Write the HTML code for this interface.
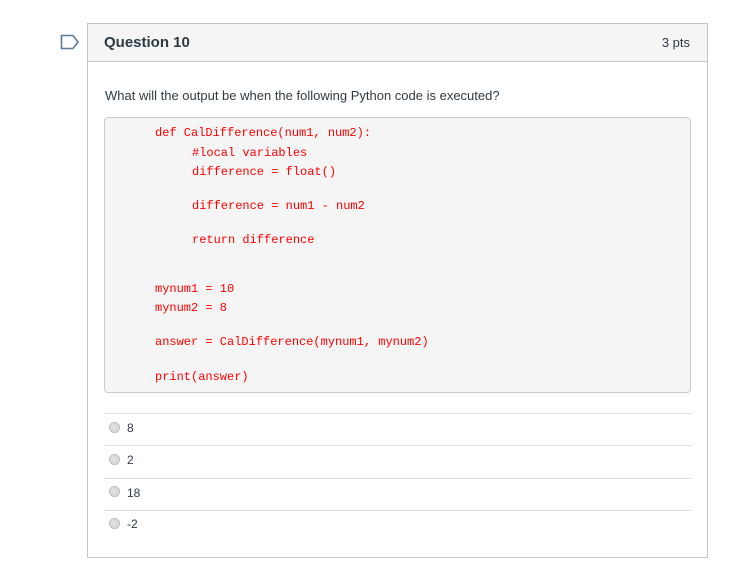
<!DOCTYPE html>
<html><head><meta charset="utf-8"><style>
*{margin:0;padding:0;box-sizing:border-box}
body{width:730px;height:571px;background:#fff;position:relative;font-family:"Liberation Sans",sans-serif;color:#2d3b45;overflow:hidden}
.abs{position:absolute}
.box{left:87px;top:23px;width:621px;height:535px;border:1px solid #c4c4c4;background:#fff}
.hdr{left:88px;top:24px;width:619px;height:38px;background:#f5f5f5;border-bottom:1px solid #c4c4c4}
.code{left:104px;top:117px;width:587px;height:276px;background:#f5f5f5;border:1px solid #c7cdd1;border-radius:4px}
.c{position:absolute;font-family:"Liberation Mono",monospace;font-size:12px;color:#f00;line-height:16px;white-space:pre}
.line{position:absolute;left:104px;width:587px;height:1px;background:#ddd}
.opt{position:absolute;left:127px;font-size:12px;color:#2d3b45}
.rad{position:absolute;left:109px;width:11px;height:11px;border-radius:50%;background:#ddd;border:1px solid #bbb}
</style></head><body>
<svg class="abs" style="left:60px;top:34px" width="20" height="16"><path d="M1.5 1.5H13L18 8L13 14.5H1.5Z" fill="none" stroke="#5b7a99" stroke-width="1.6"/></svg>
<div class="abs box"></div>
<div class="abs hdr"></div>
<div class="abs" style="left:104px;top:34px;font-size:15px;font-weight:bold;color:#2d3b45">Question 10</div>
<div class="abs" style="right:40px;top:35px;font-size:13px;color:#2d3b45">3 pts</div>
<div class="abs" style="left:105px;top:88px;font-size:13px">What will the output be when the following Python code is executed?</div>
<div class="abs code"></div>
<div class="c" style="left:155px;top:125px">def CalDifference(num1, num2):</div>
<div class="c" style="left:192px;top:145px">#local variables</div>
<div class="c" style="left:192px;top:164px">difference = float()</div>
<div class="c" style="left:192px;top:198px">difference = num1 - num2</div>
<div class="c" style="left:192px;top:232px">return difference</div>
<div class="c" style="left:155px;top:281px">mynum1 = 10</div>
<div class="c" style="left:155px;top:300px">mynum2 = 8</div>
<div class="c" style="left:155px;top:334px">answer = CalDifference(mynum1, mynum2)</div>
<div class="c" style="left:155px;top:369px">print(answer)</div>
<div class="line" style="top:413px"></div>
<div class="line" style="top:445px"></div>
<div class="line" style="top:478px"></div>
<div class="line" style="top:510px"></div>
<div class="rad" style="top:422px"></div><div class="opt" style="top:421px">8</div>
<div class="rad" style="top:454px"></div><div class="opt" style="top:453px">2</div>
<div class="rad" style="top:486px"></div><div class="opt" style="top:486px">18</div>
<div class="rad" style="top:518px"></div><div class="opt" style="top:517px">-2</div>
</body></html>
